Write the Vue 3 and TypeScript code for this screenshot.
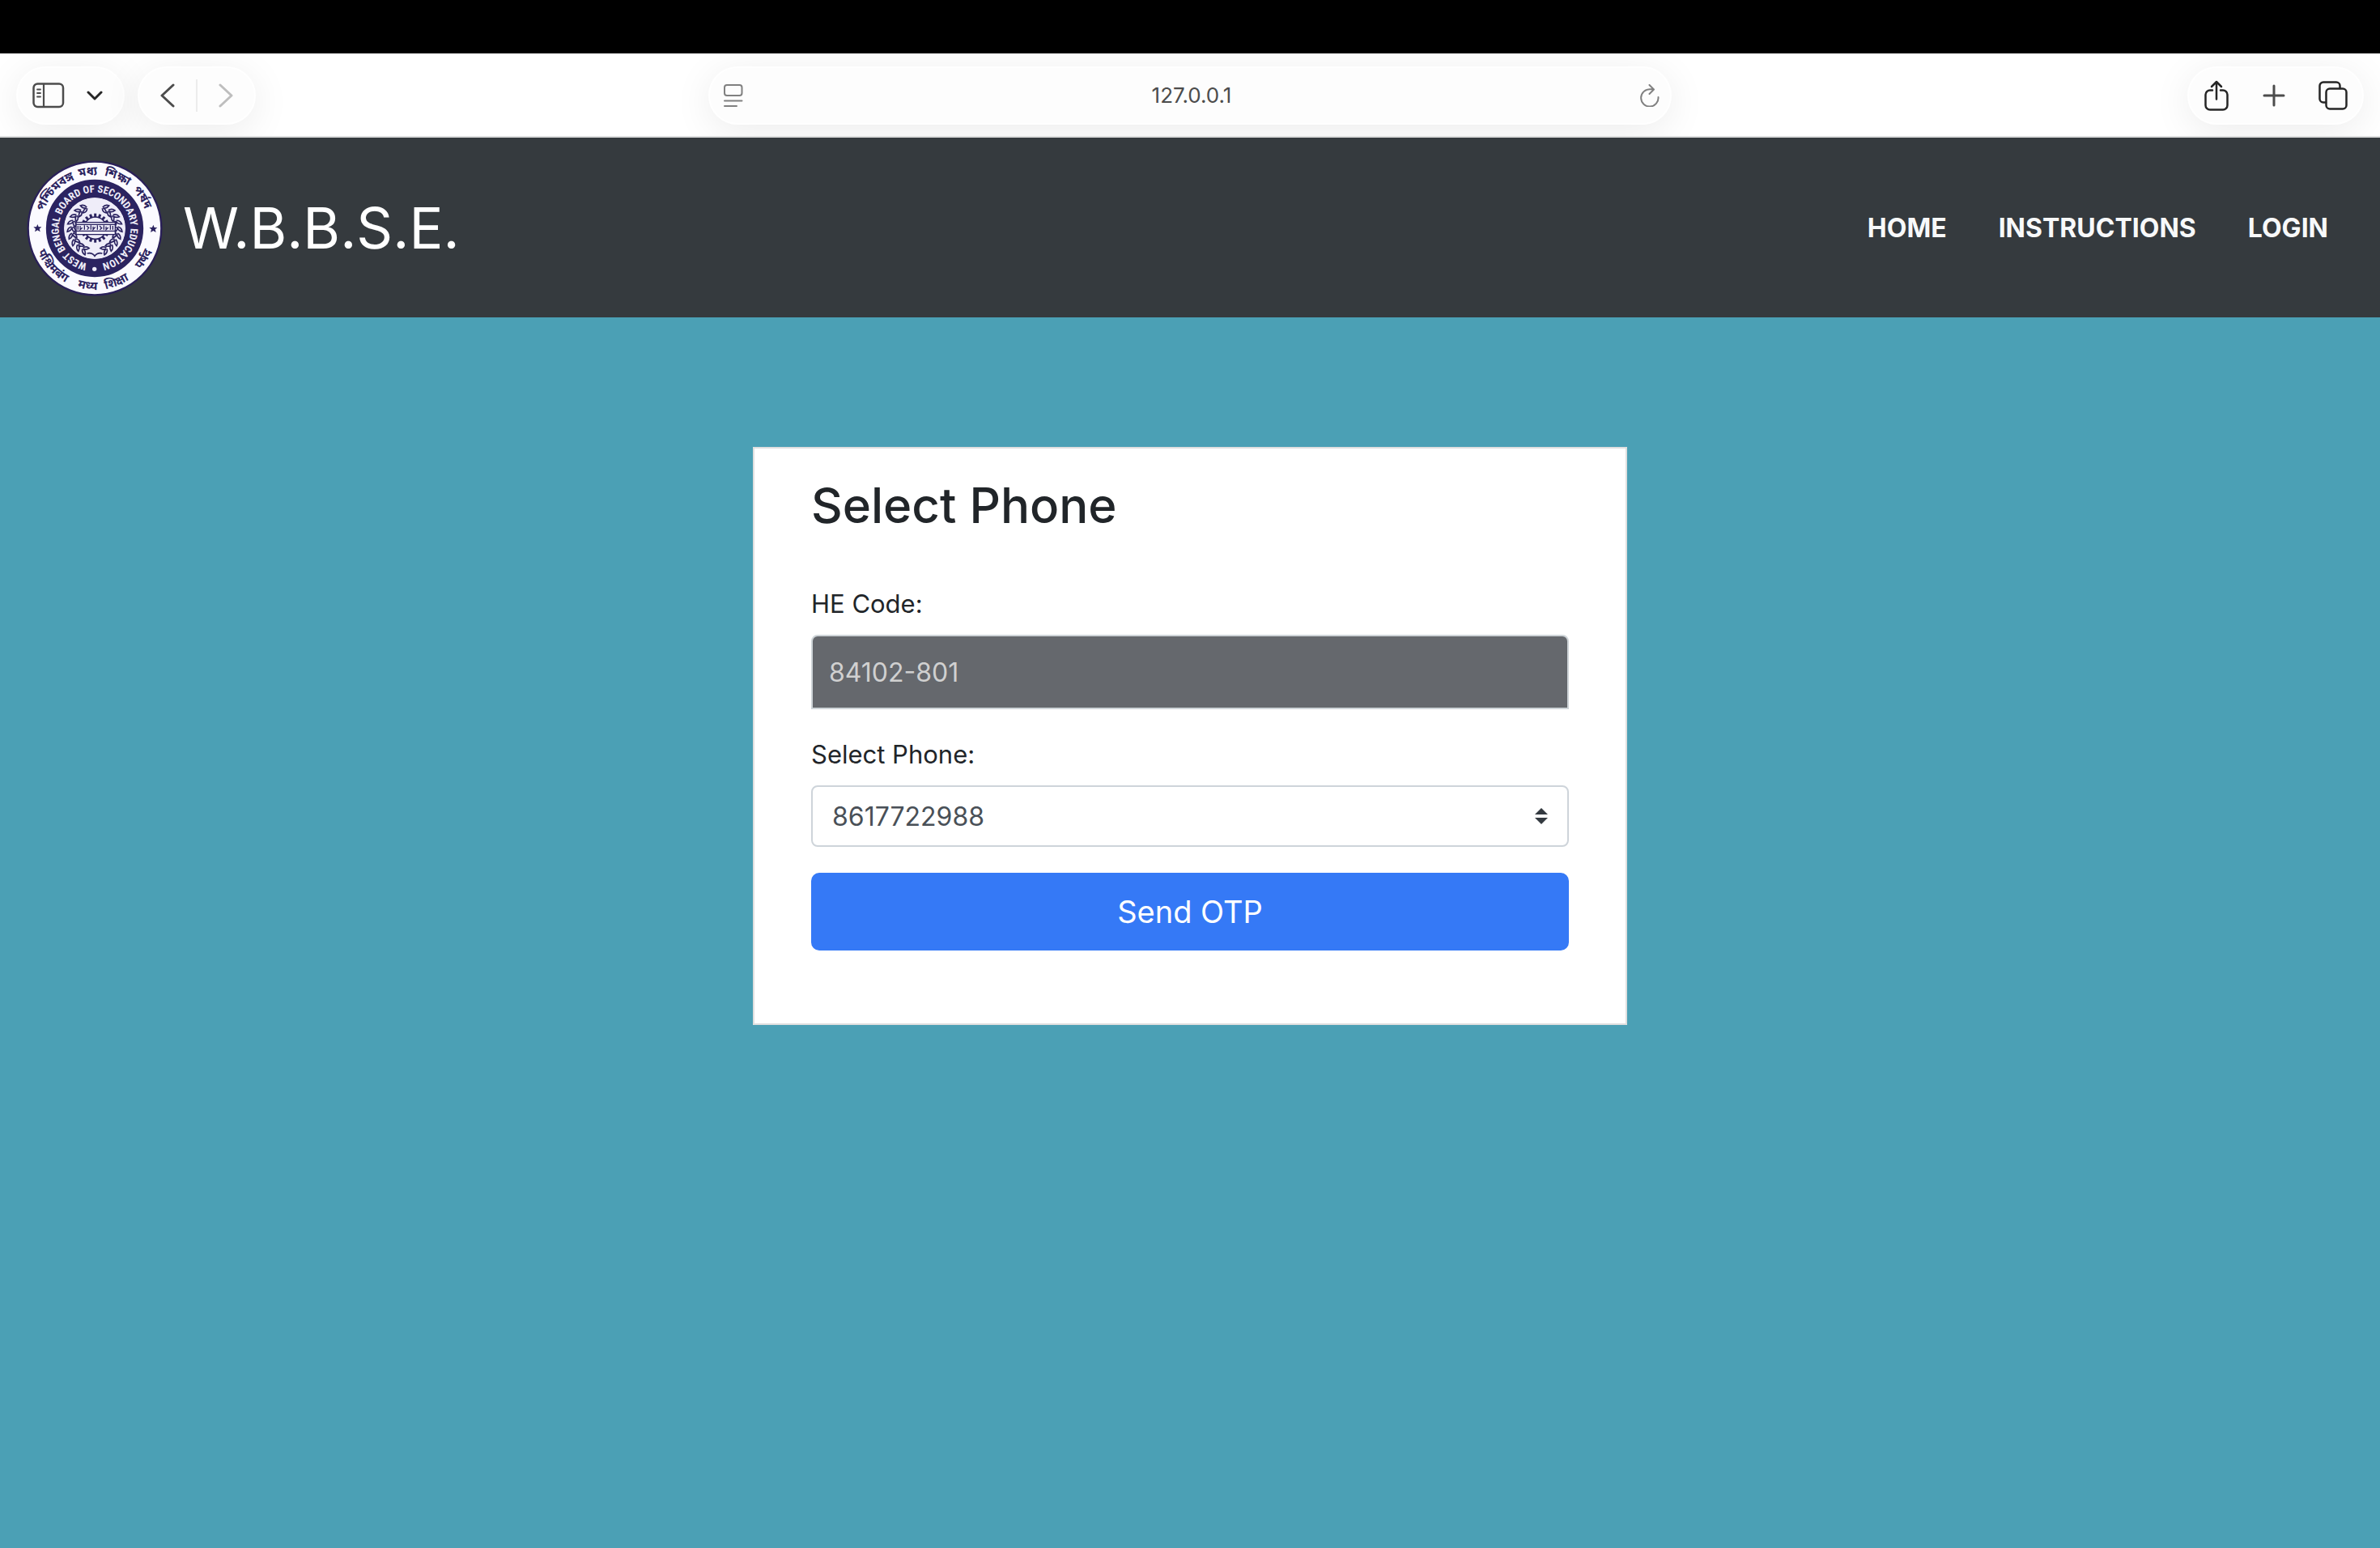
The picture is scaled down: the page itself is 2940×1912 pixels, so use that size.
<script setup lang="ts">
import { ref } from 'vue'

interface NavItem {
  label: string
  href: string
}

interface ArcWord {
  text: string
  offset: string
}

const navItems: NavItem[] = [
  { label: 'HOME', href: '#home' },
  { label: 'INSTRUCTIONS', href: '#instructions' },
  { label: 'LOGIN', href: '#login' },
]

const heCode = ref<string>('84102-801')
const phones: string[] = ['8617722988']
const phone = ref<string>(phones[0])

// Words along the rim of the seal, placed by their angle from the vertical.
const along = (text: string, degrees: number): ArcWord => ({
  text,
  offset: `${((180 + degrees) / 360) * 100}%`,
})

const topWords: ArcWord[] = [
  along('পশ্চিমবঙ্গ', -47),
  along('মধ্য', -7),
  along('শিক্ষা', 24),
  along('পর্ষদ', 57),
]

const bottomWords: ArcWord[] = [
  along('पश्चिमबंग', -48),
  along('मध्य', -7),
  along('शिक्षा', 22),
  along('पर्षद', 58),
]

// Laurel leaves: an outer and an inner leaf at each step of the branch.
const leafAngles: number[] = [20, 36, 52, 68, 84, 100, 116, 132, 148]
const gearAngles: number[] = Array.from({ length: 18 }, (_, i) => i * 20)
</script>

<template>
  <div class="screen">
    <div class="notch-strip"></div>

    <header class="toolbar">
      <div class="tool-side">
        <div class="pill sidebar-pill">
          <button class="tool" type="button" aria-label="Show sidebar">
            <svg width="40" height="32" viewBox="0 0 40 32" fill="none" stroke="#4c4c4c" stroke-linecap="round">
              <rect x="1.5" y="1.5" width="36.5" height="28.5" rx="5" stroke-width="2.5" />
              <path d="M14 2v28" stroke-width="2.2" />
              <path d="M6 8.5h4M6 13h4M6 17.5h4" stroke-width="1.8" />
            </svg>
          </button>
          <button class="tool" type="button" aria-label="Tab groups">
            <svg width="20" height="12" viewBox="0 0 20 12" fill="none" stroke="#262626" stroke-width="3" stroke-linecap="round" stroke-linejoin="round">
              <path d="M2 2l8 8 8-8" />
            </svg>
          </button>
        </div>
        <div class="pill history-pill">
          <button class="tool" type="button" aria-label="Back">
            <svg width="18" height="30" viewBox="0 0 18 30" fill="none" stroke="#4c4c4c" stroke-width="3" stroke-linecap="round" stroke-linejoin="round">
              <path d="M16 2L2 15l14 13" />
            </svg>
          </button>
          <span class="divider"></span>
          <button class="tool" type="button" aria-label="Forward">
            <svg width="18" height="30" viewBox="0 0 18 30" fill="none" stroke="#bebebe" stroke-width="3" stroke-linecap="round" stroke-linejoin="round">
              <path d="M2 2l14 13L2 28" />
            </svg>
          </button>
        </div>
      </div>

      <div class="pill address">
        <button class="tool" type="button" aria-label="Reader">
          <svg width="24" height="28" viewBox="0 0 24 28" fill="none" stroke="#808080" stroke-width="2" stroke-linecap="round">
            <rect x="1" y="1" width="21.5" height="13" rx="3" />
            <path d="M1 20.5h21.5M1 27h15" />
          </svg>
        </button>
        <span class="host">127.0.0.1</span>
        <button class="tool" type="button" aria-label="Reload">
          <svg width="24" height="28" viewBox="0 0 24 28" fill="none" stroke="#808080" stroke-width="2" stroke-linecap="round" stroke-linejoin="round">
            <path d="M22.5 16A10.7 10.7 0 1 1 12 6.2h4.5M11.5 1l5.5 5.5-5.5 5.5" />
          </svg>
        </button>
      </div>

      <div class="tool-side right">
        <div class="pill actions-pill">
          <button class="tool" type="button" aria-label="Share">
            <svg width="30" height="38" viewBox="0 0 30 38" fill="none" stroke="#262626" stroke-width="2.5" stroke-linecap="round" stroke-linejoin="round">
              <path d="M10 12.5H7A5.5 5.5 0 0 0 1.5 18v13A5.5 5.5 0 0 0 7 36.5h16a5.5 5.5 0 0 0 5.5-5.5V18a5.5 5.5 0 0 0-5.5-5.5h-3" />
              <path d="M15 23.5V2M9 8l6-6 6 6" />
            </svg>
          </button>
          <button class="tool" type="button" aria-label="New tab">
            <svg width="28" height="28" viewBox="0 0 28 28" fill="none" stroke="#4c4c4c" stroke-width="3" stroke-linecap="round">
              <path d="M14 2v24M2 14h24" />
            </svg>
          </button>
          <button class="tool" type="button" aria-label="Tab overview">
            <svg width="36" height="36" viewBox="0 0 36 36" fill="none" stroke="#262626" stroke-width="2.5" stroke-linecap="round">
              <rect x="9.5" y="9.5" width="25" height="25" rx="4.5" />
              <path d="M26.5 9V6A4.5 4.5 0 0 0 22 1.5H6A4.5 4.5 0 0 0 1.5 6v16A4.5 4.5 0 0 0 6 26.5h3" />
            </svg>
          </button>
        </div>
      </div>
    </header>

    <nav class="navbar">
      <a class="brand" href="#home">
        <svg class="seal" viewBox="38 51 504 504" role="img" aria-label="Board seal">
          <defs>
            <path id="rim-top" d="M290 501A198 198 0 0 1 290 105A198 198 0 0 1 290 501" />
            <path id="rim-bottom" d="M290 75A228 228 0 0 0 290 531A228 228 0 0 0 290 75" />
            <path id="ring" d="M290 436A133 133 0 0 1 290 170A133 133 0 0 1 290 436" />
          </defs>
          <circle cx="290" cy="303" r="247" fill="#fbfaff" stroke="#2a2058" stroke-width="7" />
          <circle cx="290" cy="303" r="147" fill="none" stroke="#2b2360" stroke-width="67" />
          <circle cx="290" cy="303" r="113" fill="#efedf9" />
          <g class="rim">
            <text v-for="word in topWords" :key="word.text">
              <textPath href="#rim-top" :startOffset="word.offset">{{ word.text }}</textPath>
            </text>
            <text v-for="word in bottomWords" :key="word.text">
              <textPath href="#rim-bottom" :startOffset="word.offset">{{ word.text }}</textPath>
            </text>
          </g>
          <text class="ring-text">
            <textPath href="#ring" startOffset="50%">WEST BENGAL BOARD OF SECONDARY EDUCATION</textPath>
          </text>
          <circle cx="289" cy="454" r="8" fill="#efedf9" />
          <g fill="#2b2360">
            <path d="M78 288l4 10 11 0-8 7 3 11-10-6-10 6 3-11-8-7 11 0z" />
            <path d="M507 290l4 10 11 0-8 7 3 11-10-6-10 6 3-11-8-7 11 0z" />
          </g>
          <g fill="none" stroke="#2b2360" stroke-width="5">
            <g v-for="angle in leafAngles" :key="angle">
              <path v-for="side in [-1, 1]" :key="side" :transform="`translate(290 306) scale(${side} 1) rotate(${angle})`" d="M0-86q5-14 20-14-4 14-18 16M0-82q6 14 20 11-6-13-18-13" />
            </g>
            <path d="M262 396q18-4 28 10 10-14 28-10" />
          </g>
          <g fill="none" stroke="#2b2360">
            <circle cx="292" cy="302" r="41" stroke-width="5" />
            <path v-for="angle in gearAngles" :key="angle" :transform="`rotate(${angle} 292 302)`" d="M292 262v-14" stroke-width="9" />
          </g>
          <path d="M221 281h145v45H221z" fill="#efedf9" stroke="#2b2360" stroke-width="4" />
          <path d="M221 289h145M221 313h145" stroke="#2b2360" stroke-width="4" />
          <path d="M228 294v14M236 294v14l8-7M252 292v16M260 294l8 7-6 7M276 292v16M284 296v12l8-10M300 292v16M308 294l8 8-7 6M324 292v16M332 296v12l8-8M348 292v16M357 294v14" fill="none" stroke="#2b2360" stroke-width="4" />
        </svg>
        <span>W.B.B.S.E.</span>
      </a>
      <ul class="links">
        <li v-for="item in navItems" :key="item.label">
          <a :href="item.href">{{ item.label }}</a>
        </li>
      </ul>
    </nav>

    <main class="page">
      <form class="card" @submit.prevent>
        <h1>Select Phone</h1>
        <label for="he-code">HE Code:</label>
        <input id="he-code" v-model="heCode" class="code" type="text" disabled />
        <label for="phone">Select Phone:</label>
        <div class="select-wrap">
          <select id="phone" v-model="phone">
            <option v-for="number in phones" :key="number" :value="number">{{ number }}</option>
          </select>
          <svg class="caret" width="16" height="20" viewBox="0 0 16 20" fill="#343a40">
            <path d="M8 0l8 8H0zM0 12h16l-8 8z" />
          </svg>
        </div>
        <button class="submit" type="submit">Send OTP</button>
      </form>
    </main>
  </div>
</template>

<style>
body {
  margin: 0;
  background: #4ba0b5;
}
</style>

<style scoped>
.screen {
  display: flex;
  flex-direction: column;
  min-height: 100vh;
  font-family: Inter, "Liberation Sans", sans-serif;
  color: #212529;
}

.screen *,
.screen {
  box-sizing: border-box;
}

.notch-strip {
  height: 66px;
  background: #000;
}

.toolbar {
  display: grid;
  grid-template-columns: 1fr minmax(0, 1190px) 1fr;
  align-items: center;
  height: 104px;
  padding: 2px 20px 0;
  background: #fff;
  border-bottom: 2px solid #dcdddd;
  overflow: hidden;
}

.tool-side {
  display: flex;
  gap: 16px;
}

.right {
  justify-content: flex-end;
}

.pill {
  display: flex;
  align-items: center;
  justify-content: space-between;
  height: 72px;
  border: 2px solid #fff;
  border-radius: 36px;
  background: #fdfdfd;
  box-shadow: 0 8px 48px rgba(0, 0, 0, 0.08);
}

.tool {
  display: flex;
  padding: 0;
  border: 0;
  background: none;
}

.sidebar-pill {
  width: 134px;
  padding: 0 25px 0 18px;
}

.history-pill {
  width: 146px;
  padding: 0 26px;
}

.divider {
  width: 2px;
  height: 40px;
  background: #ececec;
}

.address {
  padding: 0 13px 0 17px;
}

.host {
  font-size: 26px;
  line-height: 32px;
  color: #4c4c4c;
}

.actions-pill {
  width: 218px;
  padding: 0 18px 0 19px;
}

.navbar {
  display: flex;
  align-items: center;
  justify-content: space-between;
  height: 222px;
  padding: 2px 64px 0 33px;
  background: #353a3e;
}

.brand {
  display: flex;
  align-items: center;
  gap: 25px;
  font-size: 70px;
  line-height: 108px;
  color: #fff;
  text-decoration: none;
}

.seal {
  width: 168px;
  height: 168px;
}

.rim text {
  font-family: "Noto Sans Bengali", "Noto Sans Devanagari", "Noto Sans", sans-serif;
  font-size: 44px;
  font-weight: 700;
  fill: #2b2360;
  text-anchor: middle;
}

.ring-text {
  font-family: "Liberation Sans Narrow", "Roboto Condensed", Roboto, sans-serif;
  font-size: 38px;
  font-weight: 700;
  fill: #efedf9;
  text-anchor: middle;
}

.links {
  display: flex;
  gap: 64px;
  margin: 0;
  padding: 0;
  list-style: none;
}

.links a {
  font-size: 32px;
  font-weight: 700;
  line-height: 48px;
  color: #f8f9fa;
  text-decoration: none;
}

.page {
  display: flex;
  flex: 1;
  align-items: flex-start;
  justify-content: center;
  padding: 160px 32px;
  background: #4ba0b5;
}

.card {
  display: flex;
  flex-direction: column;
  width: 100%;
  max-width: 1080px;
  padding: 32px 70px 90px;
  border: 2px solid #dfdfdf;
  background: #fff;
}

h1 {
  margin: 0 0 60px;
  font-size: 60px;
  font-weight: 500;
  line-height: 76px;
}

label {
  margin-bottom: 14px;
  font-size: 31px;
  line-height: 48px;
}

.code {
  height: 92px;
  margin: 0 0 32px;
  padding: 0 20px;
  border: 2px solid #ced4d8;
  border-radius: 8px 8px 0 0;
  background: #65686d;
  font-family: inherit;
  font-size: 32px;
  color: #d0d0d0;
}

.select-wrap {
  position: relative;
  display: flex;
  margin-bottom: 32px;
}

select {
  flex: 1;
  height: 76px;
  padding: 0 56px 0 24px;
  border: 2px solid #ced4da;
  border-radius: 8px;
  appearance: none;
  background: #fff;
  font-family: inherit;
  font-size: 32px;
  color: #495057;
}

.caret {
  position: absolute;
  top: 28px;
  right: 26px;
  pointer-events: none;
}

.submit {
  height: 96px;
  border: 0;
  border-radius: 10px;
  background: #3579f6;
  font-family: inherit;
  font-size: 38px;
  line-height: 60px;
  color: #fff;
}
</style>
